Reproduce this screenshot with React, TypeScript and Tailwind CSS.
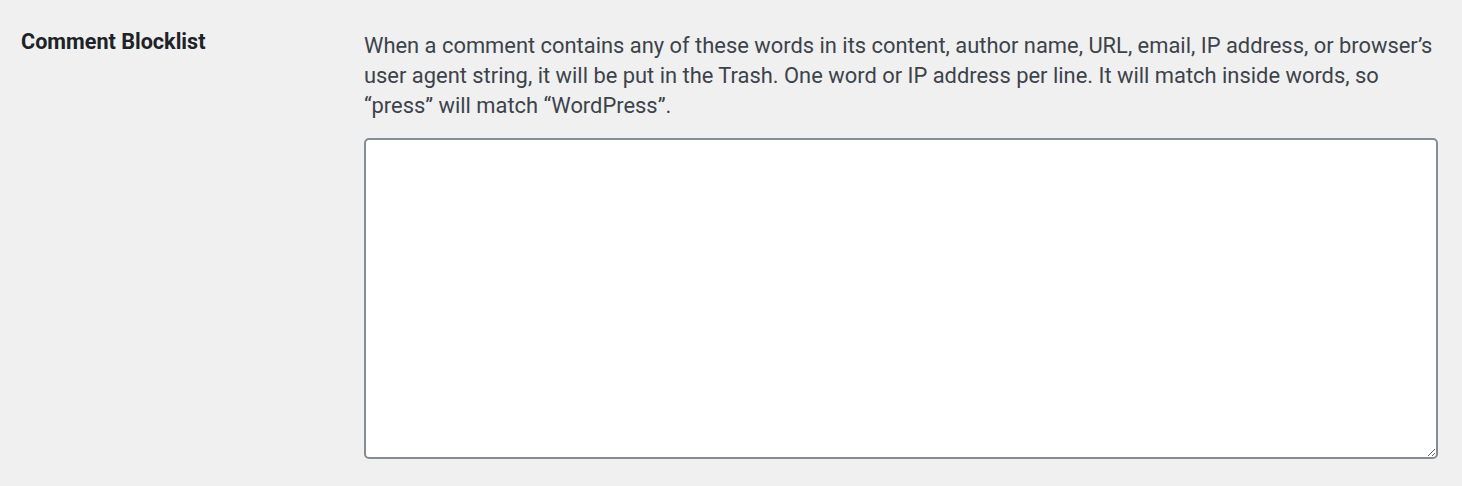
export default function App() {
  return (
    <div className="min-h-[486px] w-full bg-[#f0f0f1] font-['Roboto','Noto_Sans',sans-serif]">
      <div className="flex pt-[28px] pl-[21px]">
        {/* Label column */}
        <div className="w-[343px] shrink-0">
          <label
            htmlFor="blocklist"
            className="block text-[21.6px] leading-[28px] font-bold text-[#1d2327]"
          >
            Comment Blocklist
          </label>
        </div>

        {/* Field column */}
        <div className="w-[1074px] pt-[3px]">
          <p className="text-[21.9px] leading-[30px] text-[#3c434a]">
            When a comment contains any of these words in its content, author name, URL, email, IP address, or
            browser’s user agent string, it will be put in the Trash. One word or IP address per line. It will match
            inside words, so “press” will match “WordPress”.
          </p>
          <textarea
            id="blocklist"
            className="mt-[17px] block h-[321px] w-full rounded-[5px] border-2 border-[#848c96] bg-white px-3 py-2 text-[21px] text-[#2c3338] outline-none"
          />
        </div>
      </div>
    </div>
  );
}
